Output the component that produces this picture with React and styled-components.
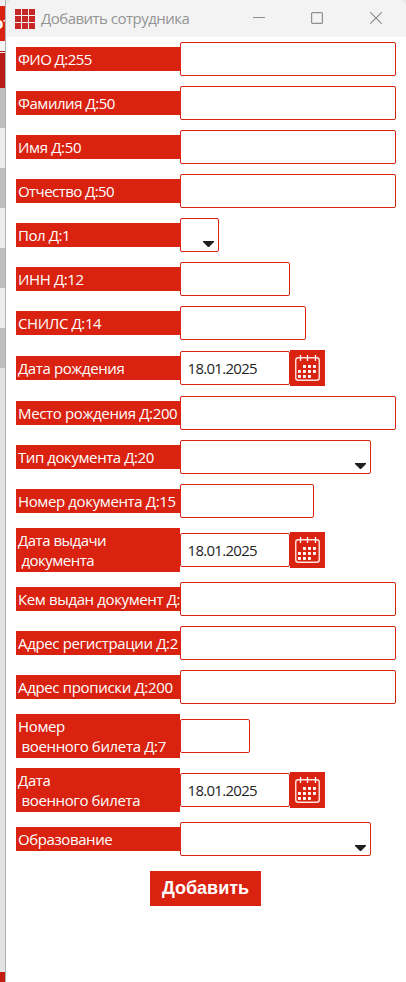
import React from "react";
import styled, { createGlobalStyle } from "styled-components";

const RED = "#d9220f";

const GlobalStyle = createGlobalStyle`
  * { box-sizing: border-box; }
  body { margin: 0; background: #e6e6e6; }
`;

const Desktop = styled.div`
  display: flex;
  width: 406px;
  height: 982px;
  overflow: hidden;
  background: #e8e8e8;
`;

const Backdrop = styled.div`
  width: 6px;
  flex: none;
  display: flex;
  flex-direction: column;
  border-right: 1px solid #b0b0b0;
`;

const Band = styled.div`
  flex: none;
  height: ${(p) => p.$h}px;
  background: ${(p) => p.$c};
  overflow: hidden;
`;

const BandText = styled.span`
  display: block;
  margin-left: -7px;
  color: #fff;
  font: bold 17px/35px "Liberation Sans", Arial, sans-serif;
  white-space: nowrap;
`;

const Window = styled.div`
  flex: 1;
  min-width: 0;
  display: flex;
  flex-direction: column;
  background: #fff;
  border-radius: 8px 8px 0 0;
  overflow: hidden;
`;

const TitleBar = styled.header`
  height: 37px;
  flex: none;
  display: flex;
  align-items: center;
  padding: 0 24px 0 9px;
  background: #f3f3f3;
`;

const AppIcon = styled.svg`
  width: 20px;
  height: 20px;
  flex: none;
  margin-right: 6px;
`;

const Title = styled.h1`
  flex: 1;
  margin: 0;
  padding-bottom: 2px;
  color: #939393;
  font: 400 15px/34px "Open Sans", "Noto Sans", sans-serif;
  letter-spacing: -0.52px;
  white-space: nowrap;
`;

const WindowControls = styled.div`
  display: flex;
  align-items: center;
  height: 37px;
  padding-bottom: 1px;

  svg { display: block; }
  svg:nth-child(2) { margin: 0 47px 0 46px; }
`;

const Form = styled.form`
  display: flex;
  flex-direction: column;
  gap: 10px;
  padding: 5px 10px 0;
`;

const Row = styled.div`
  display: flex;
  align-items: center;
`;

const Label = styled.label`
  width: 164px;
  flex: none;
  padding: 2px 0 2px 2px;
  overflow: hidden;
  background: ${RED};
  color: #fff;
  font: 400 15px/20px "Open Sans", "Noto Sans", sans-serif;
  letter-spacing: ${(p) => p.$ls}px;
  white-space: pre;
`;

const Field = styled.div`
  width: ${(p) => p.$w}px;
  height: 34px;
  display: flex;
  align-items: center;
  justify-content: ${(p) => (p.$select ? "flex-end" : "flex-start")};
  padding: ${(p) => (p.$select ? "17px 4px 0 0" : "0 6.5px")};
  border: 1px solid ${RED};
  border-radius: 2px;
  background: #fff;
  color: #1f1f1f;
  font: 400 15px/20px "Open Sans", "Noto Sans", sans-serif;
  letter-spacing: -0.7px;
`;

const DateButton = styled.button`
  width: 35px;
  height: 36px;
  padding: 0;
  border: 0;
  background: ${RED};

  svg { display: block; }
`;

const Submit = styled.button`
  align-self: center;
  width: 111px;
  height: 35px;
  margin: 5px 1px 0 0;
  padding: 0;
  border: 0;
  background: ${RED};
  color: #fff;
  font: bold 18px/35px "Liberation Sans", Arial, sans-serif;
`;

const bands = [
  [6, "#efefef"],
  [35, RED],
  [10, "#f4f4f4"],
  [1, "#b5201a"],
  [1, "#f4f4f4"],
  [35, "#b91b16"],
  [40, "#bfbfbf"],
  [40, "#ededed"],
  [40, "#bfbfbf"],
  [40, "#ededed"],
  [40, "#bfbfbf"],
  [40, "#ededed"],
  [40, "#bfbfbf"],
  [604, "#e3e3e3"],
  [10, "#c21d10"],
];

const fields = [
  { label: "ФИО Д:255", ls: -0.58, w: 216 },
  { label: "Фамилия Д:50", ls: -0.46, w: 216 },
  { label: "Имя Д:50", ls: -0.35, w: 216 },
  { label: "Отчество Д:50", ls: -0.56, w: 216 },
  { label: "Пол Д:1", ls: -0.42, w: 39, kind: "select" },
  { label: "ИНН Д:12", ls: -0.38, w: 110 },
  { label: "СНИЛС Д:14", ls: -0.39, w: 126 },
  { label: "Дата рождения", ls: -0.39, w: 110, kind: "date" },
  { label: "Место рождения Д:200", ls: -0.36, w: 216 },
  { label: "Тип документа Д:20", ls: -0.42, w: 191, kind: "select" },
  { label: "Номер документа Д:15", ls: -0.37, w: 134 },
  { label: "Дата выдачи\n документа", ls: -0.5, w: 110, kind: "date" },
  { label: "Кем выдан документ Д:", ls: -0.37, w: 216 },
  { label: "Адрес регистрации Д:2", ls: -0.35, w: 216 },
  { label: "Адрес прописки Д:200", ls: -0.34, w: 216 },
  { label: "Номер\n военного билета Д:7", ls: -0.35, w: 70 },
  { label: "Дата\n военного билета", ls: -0.38, w: 110, kind: "date" },
  { label: "Образование", ls: -0.4, w: 191, kind: "select" },
];

const GridIcon = () => (
  <AppIcon viewBox="0 0 20 20" shapeRendering="crispEdges">
    {[0, 7, 14].map((y) =>
      [0, 7, 14].map((x) => (
        <rect key={`${x}-${y}`} x={x} y={y} width="6" height="6" fill="#c62828" />
      ))
    )}
  </AppIcon>
);

const Arrow = () => (
  <svg width="11" height="6" viewBox="0 0 11 6">
    <path d="M0 0H11V1L6 6H5L0 1Z" fill="#1f1f1f" />
  </svg>
);

const dots = [
  [13, 15], [18, 15], [23, 15],
  [8, 20], [13, 20], [18, 20], [23, 20],
  [8, 25], [13, 25], [18, 25],
];

const Calendar = () => (
  <svg width="35" height="36" viewBox="0 0 35 36">
    <rect x="5.75" y="7.75" width="23.5" height="22.5" rx="2.5" fill="none" stroke="#ffe3df" strokeWidth="1.4" />
    <path d="M10.5 5V11M17.5 5V11M25.5 5V11" stroke="#fff" strokeWidth="1.3" />
    {dots.map(([x, y]) => (
      <rect key={`${x}-${y}`} x={x} y={y} width="2.9" height="2.9" fill="#fff" />
    ))}
  </svg>
);

export default function App() {
  return (
    <>
      <GlobalStyle />
      <Desktop>
        <Backdrop>
          {bands.map(([h, c], i) => (
            <Band key={i} $h={h} $c={c}>
              {i === 1 && <BandText>от</BandText>}
            </Band>
          ))}
        </Backdrop>
        <Window>
          <TitleBar>
            <GridIcon />
            <Title>Добавить сотрудника</Title>
            <WindowControls>
              <svg width="12" height="12" viewBox="0 0 12 12">
                <path d="M0 5.5H12" stroke="#8f8f8f" />
              </svg>
              <svg width="12" height="12" viewBox="0 0 12 12">
                <rect x="0.6" y="0.6" width="10.8" height="10.8" rx="1" fill="none" stroke="#8f8f8f" strokeWidth="1.2" />
              </svg>
              <svg width="12" height="12" viewBox="0 0 12 12">
                <path d="M0.3 0.3L11.7 11.7M11.7 0.3L0.3 11.7" stroke="#8a8a8a" strokeWidth="1.1" />
              </svg>
            </WindowControls>
          </TitleBar>
          <Form>
            {fields.map((f) => (
              <Row key={f.label}>
                <Label $ls={f.ls}>{f.label}</Label>
                <Field $w={f.w} $select={f.kind === "select"}>
                  {f.kind === "select" && <Arrow />}
                  {f.kind === "date" && "18.01.2025"}
                </Field>
                {f.kind === "date" && (
                  <DateButton type="button" aria-label="Выбрать дату">
                    <Calendar />
                  </DateButton>
                )}
              </Row>
            ))}
            <Submit type="button">Добавить</Submit>
          </Form>
        </Window>
      </Desktop>
    </>
  );
}
